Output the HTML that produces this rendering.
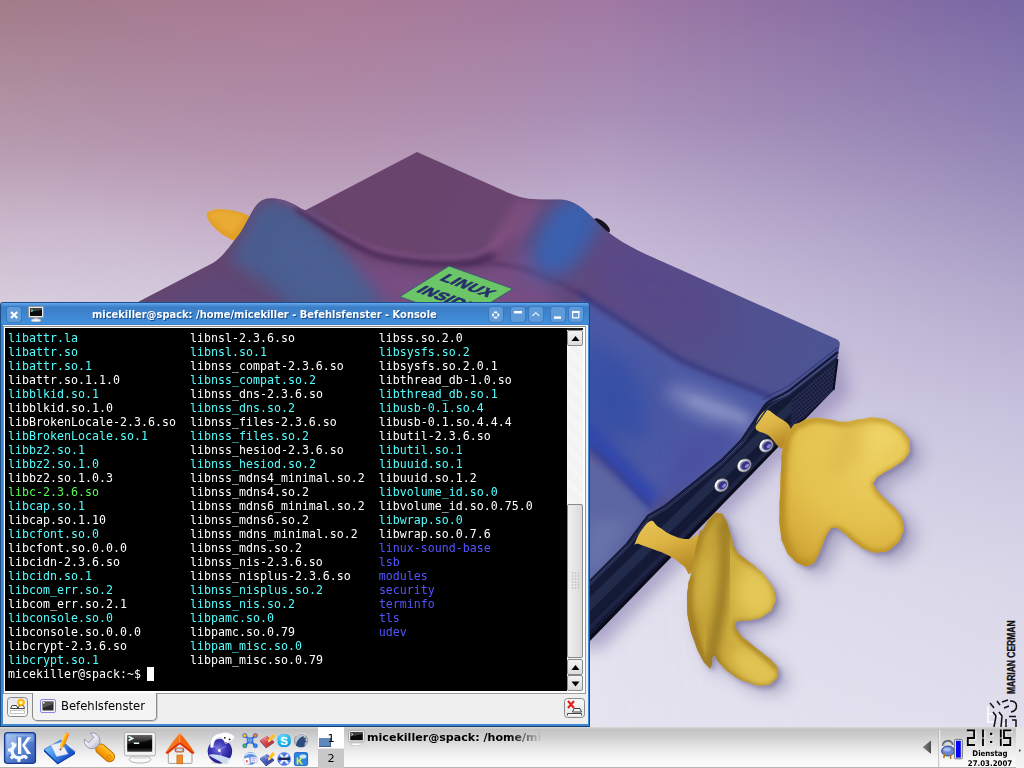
<!DOCTYPE html>
<html lang="de">
<head>
<meta charset="utf-8">
<title>micekiller@spack: /home/micekiller - Befehlsfenster - Konsole</title>
<style>
html,body{margin:0;padding:0;width:1024px;height:768px;overflow:hidden;background:#dedcea;}
body{position:relative;font-family:"DejaVu Sans","Liberation Sans",sans-serif;}
#wall{position:absolute;left:0;top:0;width:1024px;height:768px;display:block;}
/* ---------- window ---------- */
#win{position:absolute;left:0;top:302px;width:589.5px;height:425px;}
#win .frame{position:absolute;left:0;top:0;right:0;bottom:0;box-sizing:border-box;border:1px solid #1c4a82;border-top-color:#1f4f8e;border-bottom:1px solid #173e70;background:linear-gradient(#5fa4e8 0,#5fa4e8 1px,#4c90d8 2px,#3b7ec6 4.5px,#4290dc 21px,#3a80cc 21.5px,#3a80cc 22.5px,#4088d2 23px,#4088d2 100%);border-radius:3px 3px 0 0;}
#title{position:absolute;left:92px;top:4px;width:360px;height:18px;line-height:18px;font-family:"DejaVu Sans Condensed","DejaVu Sans","Liberation Sans",sans-serif;font-weight:bold;font-size:11px;color:#fff;white-space:nowrap;text-shadow:1px 1px 0 #1d4a85;}
.tb{position:absolute;top:5.2px;margin-left:0.6px;width:14.4px;height:14.4px;border-radius:3px;background:#5f9ad9;box-shadow:0 0 0 0.8px #3a76bc;}
.tb svg{display:block;margin:-0.2px 0 0 -0.6px}
#client{position:absolute;left:3px;top:23px;width:584.5px;height:399px;background:#efefef;}
#termborder{position:absolute;left:0;top:1px;width:581px;height:366px;background:#fff;border:1px solid #9c9c9c;border-top-color:#8e8e8e;border-left-color:#8e8e8e;}
#term{position:absolute;left:2px;top:3px;width:562px;height:363px;background:#000;overflow:hidden;}
pre{margin:0;}
#txt{position:absolute;left:2.7px;top:2.5px;font-family:"DejaVu Sans Mono","Liberation Mono",monospace;font-size:11.6px;line-height:14px;letter-spacing:0.017px;color:#fff;white-space:pre;}
.c{color:#54ffff}.g{color:#54ff54}.b{color:#5454ff}
#cursor{position:absolute;left:142px;top:339px;width:7px;height:14px;background:#fff;}
#sb{position:absolute;left:564px;top:3px;width:16px;height:361px;border-top:2px solid #161616;background:#f6f6f6;background-image:repeating-linear-gradient(45deg,#f0f0f0 0,#f0f0f0 1px,#f9f9f9 1px,#f9f9f9 2px);}
.sbtn{position:absolute;left:0;width:15px;height:15px;border:1px solid #8a8a8a;border-radius:2px;background:linear-gradient(#f4f4f4,#dcdcdc);box-sizing:border-box;width:16px;height:16px}
.sbtn svg{display:block;margin:-0.5px}
#thumb{position:absolute;left:0;top:174px;width:16px;height:154px;box-sizing:border-box;border:1px solid #8a8a8a;border-radius:2px;background:linear-gradient(90deg,#f0f0f0,#dadada);}
#thumb svg{display:block;margin:-0.5px}
#tabbar{position:absolute;left:0;top:369px;width:584px;height:30px;background:#efefef;}
#tabline{display:none}
#newtab{position:absolute;left:4px;top:3.4px;width:21px;height:20px;box-sizing:border-box;border:1px solid #8a8a8a;border-radius:3.5px;background:linear-gradient(#e4e4ea,#fafafa);}
#newtab svg,#closetab svg{display:block}
#closetab{position:absolute;left:560.6px;top:3.6px;width:21px;height:20px;box-sizing:border-box;border:1px solid #8a8a8a;border-radius:3.5px;background:linear-gradient(#f8f8f8,#e6e6e6);}
#tab{position:absolute;left:29px;top:-1px;width:125px;height:28px;box-sizing:border-box;border:1px solid #8a8a8a;border-top:none;border-radius:0 0 5px 5px;background:#f3f3f3;box-shadow:1px 1px 0 #cfcfcf;}
#tab span{position:absolute;left:28px;top:6px;font-size:11.6px;line-height:15px;color:#000;white-space:nowrap;}
/* ---------- panel ---------- */
#panel{position:absolute;left:0;top:727px;width:1024px;height:41px;background:linear-gradient(#d8d8d8 0,#c2c2c2 2.5px,#cccccc 8px,#dcdcdc 16px,#ebebeb 24px,#f6f6f6 32px,#fbfbfb 39px,#fbfbfb 39.5px,#b4b4b4 40.5px);}
#pager{position:absolute;left:318px;top:0;width:26px;height:41px;font-size:11.3px;color:#000;}
#d1{position:absolute;left:0;top:0;width:26px;height:21px;background:#fff;}
#d2{position:absolute;left:0;top:22px;width:26px;height:19px;background:#c8c8c8;}
#pager span{position:absolute;left:0;width:26px;text-align:center;line-height:14px;}
#d1 span{top:4.5px}#d2 span{top:3px}
#dwin{position:absolute;left:1px;top:11px;width:12px;height:9px;background:#5f87ba;border-right:1px solid #3d5f8e;border-bottom:1px solid #3d5f8e;box-sizing:border-box;}
#task{position:absolute;left:345px;top:0;width:200px;height:20px;overflow:hidden;}
#tasktxt{position:absolute;left:22.4px;top:3.4px;font-size:11.08px;font-weight:bold;line-height:16px;white-space:nowrap;color:#000;-webkit-mask-image:linear-gradient(90deg,#000 0,#000 142px,rgba(0,0,0,0) 176px);mask-image:linear-gradient(90deg,#000 0,#000 142px,rgba(0,0,0,0) 176px);}
#day,#date{position:absolute;left:960px;width:60px;text-align:center;font-family:"DejaVu Sans Condensed","DejaVu Sans",sans-serif;font-size:7.8px;line-height:9px;color:#000;font-weight:bold;white-space:nowrap;}
#day{top:21.6px}#date{top:32.4px}
#hide{position:absolute;left:1016px;top:0;width:8px;height:41px;background:linear-gradient(#e4e4e4,#f4f4f4);}
#hide svg{display:block}
/* GRAYAA */
#title,#txt,#tab span,#pager span,#tasktxt,#day,#date{will-change:transform;}
</style>
</head>
<body>
<svg id="wall" width="1024" height="768" viewBox="0 0 1024 768">
<defs>
  <linearGradient id="vL" x1="0" y1="0" x2="0" y2="768" gradientUnits="userSpaceOnUse">
    <stop offset="0" stop-color="#a27c88"/>
    <stop offset="0.195" stop-color="#b89cb0"/>
    <stop offset="0.3" stop-color="#ccb9cd"/>
    <stop offset="0.39" stop-color="#d6ccdc"/>
    <stop offset="0.5" stop-color="#e6e0ee"/>
    <stop offset="0.6" stop-color="#efecf5"/>
    <stop offset="0.8" stop-color="#efedf6"/>
    <stop offset="1" stop-color="#ebe9f3"/>
  </linearGradient>
  <linearGradient id="vM" x1="0" y1="0" x2="0" y2="768" gradientUnits="userSpaceOnUse">
    <stop offset="0" stop-color="#9e78a3"/>
    <stop offset="0.15" stop-color="#a990b7"/>
    <stop offset="0.28" stop-color="#c0b0d0"/>
    <stop offset="0.34" stop-color="#c9bcd9"/>
    <stop offset="0.42" stop-color="#d0c8e0"/>
    <stop offset="0.6" stop-color="#dcd8ea"/>
    <stop offset="0.8" stop-color="#e3e1ee"/>
    <stop offset="1" stop-color="#e6e4f0"/>
  </linearGradient>
  <linearGradient id="vR" x1="0" y1="0" x2="0" y2="768" gradientUnits="userSpaceOnUse">
    <stop offset="0" stop-color="#7868a4"/>
    <stop offset="0.195" stop-color="#9486b6"/>
    <stop offset="0.39" stop-color="#b4abcd"/>
    <stop offset="0.55" stop-color="#c8c3de"/>
    <stop offset="0.75" stop-color="#d9d6e8"/>
    <stop offset="1" stop-color="#e2e0ee"/>
  </linearGradient>
  <linearGradient id="hM" x1="0" y1="0" x2="1024" y2="0" gradientUnits="userSpaceOnUse">
    <stop offset="0" stop-color="#000"/>
    <stop offset="0.6" stop-color="#fff"/>
    <stop offset="1" stop-color="#fff"/>
  </linearGradient>
  <linearGradient id="hR" x1="0" y1="0" x2="1024" y2="0" gradientUnits="userSpaceOnUse">
    <stop offset="0" stop-color="#000"/>
    <stop offset="0.6" stop-color="#000"/>
    <stop offset="1" stop-color="#fff"/>
  </linearGradient>
  <mask id="mM" maskUnits="userSpaceOnUse" x="0" y="0" width="1024" height="768"><rect width="1024" height="768" fill="url(#hM)"/></mask>
  <mask id="mR" maskUnits="userSpaceOnUse" x="0" y="0" width="1024" height="768"><rect width="1024" height="768" fill="url(#hR)"/></mask>
  <radialGradient id="gPink" cx="320" cy="-30" r="340" gradientUnits="userSpaceOnUse"><stop offset="0" stop-color="#c07c94" stop-opacity="0.34"/><stop offset="0.6" stop-color="#b87c98" stop-opacity="0.16"/><stop offset="1" stop-color="#b07c9c" stop-opacity="0"/></radialGradient>
</defs>
<rect width="1024" height="768" fill="url(#vL)"/>
<rect width="1024" height="768" fill="url(#vM)" mask="url(#mM)"/>
<rect width="1024" height="768" fill="url(#vR)" mask="url(#mR)"/>
<rect width="1024" height="320" fill="url(#gPink)"/>
<defs>
<filter id="b2" x="-20%" y="-20%" width="140%" height="140%"><feGaussianBlur stdDeviation="2"/></filter>
<filter id="b4" x="-30%" y="-30%" width="160%" height="160%"><feGaussianBlur stdDeviation="4"/></filter>
<filter id="b8" x="-40%" y="-40%" width="180%" height="180%"><feGaussianBlur stdDeviation="8"/></filter>
<filter id="b14" x="-50%" y="-50%" width="200%" height="200%"><feGaussianBlur stdDeviation="14"/></filter>
<filter id="b22" x="-60%" y="-60%" width="220%" height="220%"><feGaussianBlur stdDeviation="22"/></filter>
<clipPath id="cpCover"><path d="M417,152 L505,191.3 C520,198 528,199.5 540,199.5 L560,199.5 C574,200 584,209 595,220 C606,231 616,240 644,253.4 L835,338.6 Q841,341 839.5,346 L838,356 L790,393.5 C778,401 770,400 764.6,407 C760,414 757,418 754,423.8 L741.7,442.5 L720.8,463.3 L700,480 L665,508 L648,518 L627,546 L589,584 L560,612 L100,612 L100,325 L140,301 L213,263 C222,258 230,246 239.6,233.8 C246,224 252,210 257,204.5 C262,199 266,198.6 271,198.3 C280,198 290,202 296,205.5 C300,208 303,210 305.5,210.3 L417,152Z"/></clipPath>
<clipPath id="cpF1"><path d="M790.8,429.1 C796.4,420.4 792.5,426.2 799.9,422.6 C807.3,418.9 803.4,419.3 812.9,418.1 C822.5,417.0 818.1,418.0 828.5,419.2 C839.0,420.4 833.8,421.8 844.2,421.8 C854.6,421.8 848.5,420.4 859.8,419.2 C871.1,418.0 866.7,416.6 878.0,418.1 C889.3,419.7 884.5,418.5 893.6,423.9 C902.8,429.2 900.0,426.9 905.4,434.3 C910.7,441.6 909.4,438.6 909.8,446.0 C910.2,453.4 911.2,449.9 906.7,456.4 C902.2,462.9 904.1,459.9 896.2,465.5 C888.4,471.2 890.2,468.6 883.2,473.3 C876.3,478.1 878.0,475.1 875.4,479.8 C872.8,484.6 871.9,481.1 875.4,487.7 C878.9,494.2 878.9,492.0 885.8,499.4 C892.8,506.8 890.6,502.0 896.2,509.8 C901.9,517.6 901.0,514.1 902.8,522.8 C904.5,531.5 904.5,528.0 901.5,535.8 C898.4,543.6 900.2,540.9 893.6,546.2 C887.1,551.6 890.6,550.7 881.9,552.0 C873.2,553.3 876.7,553.4 867.6,550.2 C858.5,546.9 862.4,548.0 854.6,542.3 C846.8,536.7 850.7,538.0 844.2,533.2 C837.7,528.5 840.3,528.5 835.1,528.0 C829.8,527.6 832.9,525.9 828.5,531.9 C824.2,538.0 825.9,537.6 822.0,546.2 C818.1,554.9 820.7,551.7 816.8,558.0 C812.9,564.2 815.5,562.8 810.3,565.0 C805.1,567.2 807.3,566.8 801.2,564.5 C795.1,562.1 797.7,564.0 792.1,558.0 C786.4,551.9 788.2,555.4 784.3,546.2 C780.4,537.1 781.9,542.8 780.4,530.6 C778.8,518.5 779.6,523.7 779.6,509.8 C779.6,495.9 779.8,502.8 780.4,489.0 C780.9,475.1 780.3,481.6 781.1,468.1 C782.0,454.7 779.8,461.6 783.0,448.6 C786.2,435.6 785.1,437.7 790.8,429.1Z"/></clipPath>
<clipPath id="cpF2"><path d="M698.1,537.8 C702.0,523.4 699.0,535.6 703.3,528.6 C707.7,521.7 705.9,522.1 711.1,516.9 C716.4,511.7 714.2,512.2 719.0,513.0 C723.7,513.9 721.6,512.6 725.5,519.5 C729.4,526.5 727.2,523.9 730.7,533.9 C734.1,543.8 731.1,541.2 735.9,549.5 C740.7,557.7 737.6,552.1 745.0,558.6 C752.4,565.1 750.2,561.6 758.0,569.0 C765.8,576.4 762.8,572.5 768.4,580.7 C774.1,589.0 773.2,585.5 774.9,593.8 C776.7,602.0 776.7,598.5 773.6,605.5 C770.6,612.4 772.8,609.8 765.8,614.6 C758.9,619.4 761.5,617.6 752.8,619.8 C744.1,622.0 745.4,619.4 739.8,621.1 C734.1,622.8 735.9,620.7 735.9,625.0 C735.9,629.3 735.0,628.0 739.8,634.1 C744.6,640.2 742.4,636.7 750.2,643.2 C758.0,649.7 755.4,647.1 763.2,653.6 C771.0,660.2 768.7,656.7 773.6,662.8 C778.6,668.8 778.1,665.8 778.1,671.9 C778.1,678.0 778.6,676.5 773.6,681.0 C768.7,685.5 771.9,685.0 763.2,685.4 C754.5,685.9 758.0,685.9 747.6,682.3 C737.2,678.6 741.1,680.6 732.0,674.5 C722.9,668.4 726.3,670.1 720.3,664.1 C714.2,658.0 716.8,655.4 713.8,656.2 C710.7,657.1 713.3,663.6 711.1,666.7 C709.0,669.7 710.7,668.8 707.2,665.4 C703.8,661.9 705.1,664.5 700.7,656.2 C696.4,648.0 698.1,651.9 694.2,640.6 C690.3,629.3 691.4,634.5 689.0,622.4 C686.7,610.2 687.4,616.3 687.2,604.2 C686.9,592.0 686.8,596.8 688.2,585.9 C689.7,575.1 688.3,587.7 691.6,571.6 C694.9,555.6 694.2,552.1 698.1,537.8Z"/></clipPath>
<linearGradient id="gCover" x1="330" y1="200" x2="800" y2="420" gradientUnits="userSpaceOnUse"><stop offset="0" stop-color="#69446b"/><stop offset="0.42" stop-color="#694672"/><stop offset="0.6" stop-color="#5b4b86"/><stop offset="0.8" stop-color="#52508e"/><stop offset="1" stop-color="#4c5494"/></linearGradient>
<linearGradient id="gFace" x1="600" y1="560" x2="640" y2="600" gradientUnits="userSpaceOnUse"><stop offset="0" stop-color="#1c2448"/><stop offset="0.35" stop-color="#2a3668"/><stop offset="0.5" stop-color="#141a38"/><stop offset="0.8" stop-color="#222c58"/><stop offset="1" stop-color="#10142c"/></linearGradient>
<linearGradient id="gNeck" x1="0" y1="0" x2="0.4" y2="1"><stop offset="0" stop-color="#e8c656"/><stop offset="0.5" stop-color="#dcb444"/><stop offset="1" stop-color="#b88c28"/></linearGradient>
<radialGradient id="gF1" cx="870" cy="450" r="120" gradientUnits="userSpaceOnUse"><stop offset="0" stop-color="#ecd062"/><stop offset="0.6" stop-color="#e4c24e"/><stop offset="1" stop-color="#d4aa3a"/></radialGradient>
<linearGradient id="gF2" x1="688" y1="600" x2="775" y2="600" gradientUnits="userSpaceOnUse"><stop offset="0" stop-color="#b08a28"/><stop offset="0.2" stop-color="#c4a238"/><stop offset="0.5" stop-color="#ceae40"/><stop offset="0.75" stop-color="#dabc4c"/><stop offset="1" stop-color="#e0c252"/></linearGradient>
<pattern id="mesh" width="3" height="3" patternUnits="userSpaceOnUse" patternTransform="rotate(-40)"><rect width="3" height="3" fill="#2a305c"/><circle cx="1.5" cy="1.5" r="1.05" fill="#0c0e20"/></pattern>
</defs>
<g opacity="0.6">
<path d="M790.8,429.1 C796.4,420.4 792.5,426.2 799.9,422.6 C807.3,418.9 803.4,419.3 812.9,418.1 C822.5,417.0 818.1,418.0 828.5,419.2 C839.0,420.4 833.8,421.8 844.2,421.8 C854.6,421.8 848.5,420.4 859.8,419.2 C871.1,418.0 866.7,416.6 878.0,418.1 C889.3,419.7 884.5,418.5 893.6,423.9 C902.8,429.2 900.0,426.9 905.4,434.3 C910.7,441.6 909.4,438.6 909.8,446.0 C910.2,453.4 911.2,449.9 906.7,456.4 C902.2,462.9 904.1,459.9 896.2,465.5 C888.4,471.2 890.2,468.6 883.2,473.3 C876.3,478.1 878.0,475.1 875.4,479.8 C872.8,484.6 871.9,481.1 875.4,487.7 C878.9,494.2 878.9,492.0 885.8,499.4 C892.8,506.8 890.6,502.0 896.2,509.8 C901.9,517.6 901.0,514.1 902.8,522.8 C904.5,531.5 904.5,528.0 901.5,535.8 C898.4,543.6 900.2,540.9 893.6,546.2 C887.1,551.6 890.6,550.7 881.9,552.0 C873.2,553.3 876.7,553.4 867.6,550.2 C858.5,546.9 862.4,548.0 854.6,542.3 C846.8,536.7 850.7,538.0 844.2,533.2 C837.7,528.5 840.3,528.5 835.1,528.0 C829.8,527.6 832.9,525.9 828.5,531.9 C824.2,538.0 825.9,537.6 822.0,546.2 C818.1,554.9 820.7,551.7 816.8,558.0 C812.9,564.2 815.5,562.8 810.3,565.0 C805.1,567.2 807.3,566.8 801.2,564.5 C795.1,562.1 797.7,564.0 792.1,558.0 C786.4,551.9 788.2,555.4 784.3,546.2 C780.4,537.1 781.9,542.8 780.4,530.6 C778.8,518.5 779.6,523.7 779.6,509.8 C779.6,495.9 779.8,502.8 780.4,489.0 C780.9,475.1 780.3,481.6 781.1,468.1 C782.0,454.7 779.8,461.6 783.0,448.6 C786.2,435.6 785.1,437.7 790.8,429.1Z" fill="#8c86ac" filter="url(#b8)" transform="translate(12,9)"/>
<path d="M698.1,537.8 C702.0,523.4 699.0,535.6 703.3,528.6 C707.7,521.7 705.9,522.1 711.1,516.9 C716.4,511.7 714.2,512.2 719.0,513.0 C723.7,513.9 721.6,512.6 725.5,519.5 C729.4,526.5 727.2,523.9 730.7,533.9 C734.1,543.8 731.1,541.2 735.9,549.5 C740.7,557.7 737.6,552.1 745.0,558.6 C752.4,565.1 750.2,561.6 758.0,569.0 C765.8,576.4 762.8,572.5 768.4,580.7 C774.1,589.0 773.2,585.5 774.9,593.8 C776.7,602.0 776.7,598.5 773.6,605.5 C770.6,612.4 772.8,609.8 765.8,614.6 C758.9,619.4 761.5,617.6 752.8,619.8 C744.1,622.0 745.4,619.4 739.8,621.1 C734.1,622.8 735.9,620.7 735.9,625.0 C735.9,629.3 735.0,628.0 739.8,634.1 C744.6,640.2 742.4,636.7 750.2,643.2 C758.0,649.7 755.4,647.1 763.2,653.6 C771.0,660.2 768.7,656.7 773.6,662.8 C778.6,668.8 778.1,665.8 778.1,671.9 C778.1,678.0 778.6,676.5 773.6,681.0 C768.7,685.5 771.9,685.0 763.2,685.4 C754.5,685.9 758.0,685.9 747.6,682.3 C737.2,678.6 741.1,680.6 732.0,674.5 C722.9,668.4 726.3,670.1 720.3,664.1 C714.2,658.0 716.8,655.4 713.8,656.2 C710.7,657.1 713.3,663.6 711.1,666.7 C709.0,669.7 710.7,668.8 707.2,665.4 C703.8,661.9 705.1,664.5 700.7,656.2 C696.4,648.0 698.1,651.9 694.2,640.6 C690.3,629.3 691.4,634.5 689.0,622.4 C686.7,610.2 687.4,616.3 687.2,604.2 C686.9,592.0 686.8,596.8 688.2,585.9 C689.7,575.1 688.3,587.7 691.6,571.6 C694.9,555.6 694.2,552.1 698.1,537.8Z" fill="#8c86ac" filter="url(#b8)" transform="translate(10,8)"/>
<path d="M838,345 L850,395 L800,440 L600,650 L560,640 Z" fill="#8a80b0" filter="url(#b8)"/>
</g>
<path d="M790.8,429.1 C796.4,420.4 792.5,426.2 799.9,422.6 C807.3,418.9 803.4,419.3 812.9,418.1 C822.5,417.0 818.1,418.0 828.5,419.2 C839.0,420.4 833.8,421.8 844.2,421.8 C854.6,421.8 848.5,420.4 859.8,419.2 C871.1,418.0 866.7,416.6 878.0,418.1 C889.3,419.7 884.5,418.5 893.6,423.9 C902.8,429.2 900.0,426.9 905.4,434.3 C910.7,441.6 909.4,438.6 909.8,446.0 C910.2,453.4 911.2,449.9 906.7,456.4 C902.2,462.9 904.1,459.9 896.2,465.5 C888.4,471.2 890.2,468.6 883.2,473.3 C876.3,478.1 878.0,475.1 875.4,479.8 C872.8,484.6 871.9,481.1 875.4,487.7 C878.9,494.2 878.9,492.0 885.8,499.4 C892.8,506.8 890.6,502.0 896.2,509.8 C901.9,517.6 901.0,514.1 902.8,522.8 C904.5,531.5 904.5,528.0 901.5,535.8 C898.4,543.6 900.2,540.9 893.6,546.2 C887.1,551.6 890.6,550.7 881.9,552.0 C873.2,553.3 876.7,553.4 867.6,550.2 C858.5,546.9 862.4,548.0 854.6,542.3 C846.8,536.7 850.7,538.0 844.2,533.2 C837.7,528.5 840.3,528.5 835.1,528.0 C829.8,527.6 832.9,525.9 828.5,531.9 C824.2,538.0 825.9,537.6 822.0,546.2 C818.1,554.9 820.7,551.7 816.8,558.0 C812.9,564.2 815.5,562.8 810.3,565.0 C805.1,567.2 807.3,566.8 801.2,564.5 C795.1,562.1 797.7,564.0 792.1,558.0 C786.4,551.9 788.2,555.4 784.3,546.2 C780.4,537.1 781.9,542.8 780.4,530.6 C778.8,518.5 779.6,523.7 779.6,509.8 C779.6,495.9 779.8,502.8 780.4,489.0 C780.9,475.1 780.3,481.6 781.1,468.1 C782.0,454.7 779.8,461.6 783.0,448.6 C786.2,435.6 785.1,437.7 790.8,429.1Z" fill="#6a6290" opacity="0.5" filter="url(#b2)" transform="translate(3,3)"/>
<path d="M698.1,537.8 C702.0,523.4 699.0,535.6 703.3,528.6 C707.7,521.7 705.9,522.1 711.1,516.9 C716.4,511.7 714.2,512.2 719.0,513.0 C723.7,513.9 721.6,512.6 725.5,519.5 C729.4,526.5 727.2,523.9 730.7,533.9 C734.1,543.8 731.1,541.2 735.9,549.5 C740.7,557.7 737.6,552.1 745.0,558.6 C752.4,565.1 750.2,561.6 758.0,569.0 C765.8,576.4 762.8,572.5 768.4,580.7 C774.1,589.0 773.2,585.5 774.9,593.8 C776.7,602.0 776.7,598.5 773.6,605.5 C770.6,612.4 772.8,609.8 765.8,614.6 C758.9,619.4 761.5,617.6 752.8,619.8 C744.1,622.0 745.4,619.4 739.8,621.1 C734.1,622.8 735.9,620.7 735.9,625.0 C735.9,629.3 735.0,628.0 739.8,634.1 C744.6,640.2 742.4,636.7 750.2,643.2 C758.0,649.7 755.4,647.1 763.2,653.6 C771.0,660.2 768.7,656.7 773.6,662.8 C778.6,668.8 778.1,665.8 778.1,671.9 C778.1,678.0 778.6,676.5 773.6,681.0 C768.7,685.5 771.9,685.0 763.2,685.4 C754.5,685.9 758.0,685.9 747.6,682.3 C737.2,678.6 741.1,680.6 732.0,674.5 C722.9,668.4 726.3,670.1 720.3,664.1 C714.2,658.0 716.8,655.4 713.8,656.2 C710.7,657.1 713.3,663.6 711.1,666.7 C709.0,669.7 710.7,668.8 707.2,665.4 C703.8,661.9 705.1,664.5 700.7,656.2 C696.4,648.0 698.1,651.9 694.2,640.6 C690.3,629.3 691.4,634.5 689.0,622.4 C686.7,610.2 687.4,616.3 687.2,604.2 C686.9,592.0 686.8,596.8 688.2,585.9 C689.7,575.1 688.3,587.7 691.6,571.6 C694.9,555.6 694.2,552.1 698.1,537.8Z" fill="#6a6290" opacity="0.5" filter="url(#b2)" transform="translate(3,3)"/>
<path d="M206.8,213.5 C210,209 222,208.5 230.8,210.3 C238,211.5 244,213.5 248.4,215.6 L250,225 L233.8,241 C226,237 220,233 216.2,229.4 C211,224.5 206,218 206.8,213.5Z" fill="#e2a028"/>
<path d="M209,213 C214,210 226,211 238,214 L244,218 L232,234 C222,228 212,220 209,213Z" fill="#eeb03a" opacity="0.7" filter="url(#b2)"/>
<ellipse cx="602" cy="225.5" rx="10" ry="4" transform="rotate(40 602 225.5)" fill="#16121e"/>
<path d="M838,350 L834.5,388 L589,641 L560,670 L560,580 L780,380Z" fill="#141a36"/>
<path d="M792,400 L589,598 L589,612 L798,406Z" fill="#283252" opacity="0.7"/>
<path d="M812,404 L589,626 L589,631 L818,405Z" fill="#242c4c" opacity="0.6"/>
<path d="M834.5,385 L589,637 L589,642 L834.5,389Z" fill="#0a0c1c"/>
<path d="M837.5,359 L833.5,390 L806,416 L791,428 L791.7,398.75Z" fill="url(#mesh)"/>
<path d="M837.5,359 L833.5,390" stroke="#0c0e20" stroke-width="2"/>
<g transform="translate(766.7,445.6) rotate(-42)"><ellipse rx="7.8" ry="6.6" fill="#3c3c4c"/><ellipse rx="7.3" ry="6.1" cx="-0.4" cy="-0.4" fill="#a4a4b2"/><ellipse rx="6.2" ry="5" cx="-1" cy="-1.1" fill="#dcdce4"/><ellipse rx="5.2" ry="4.2" cx="0" cy="0" fill="#787890"/><ellipse rx="4.4" ry="3.4" cx="0.5" cy="0.6" fill="#34348c"/><ellipse rx="2.6" ry="1.5" cx="1.3" cy="1.9" fill="#9c9ce0" opacity="0.8"/><path d="M-5.6,-2.6 A6.2,5 0 0 1 1.5,-5.6" stroke="#fff" stroke-width="1.3" fill="none"/></g>
<g transform="translate(744.8,465.4) rotate(-42)"><ellipse rx="7.8" ry="6.6" fill="#3c3c4c"/><ellipse rx="7.3" ry="6.1" cx="-0.4" cy="-0.4" fill="#a4a4b2"/><ellipse rx="6.2" ry="5" cx="-1" cy="-1.1" fill="#dcdce4"/><ellipse rx="5.2" ry="4.2" cx="0" cy="0" fill="#787890"/><ellipse rx="4.4" ry="3.4" cx="0.5" cy="0.6" fill="#34348c"/><ellipse rx="2.6" ry="1.5" cx="1.3" cy="1.9" fill="#9c9ce0" opacity="0.8"/><path d="M-5.6,-2.6 A6.2,5 0 0 1 1.5,-5.6" stroke="#fff" stroke-width="1.3" fill="none"/></g>
<g transform="translate(721.9,485.2) rotate(-42)"><ellipse rx="7.8" ry="6.6" fill="#3c3c4c"/><ellipse rx="7.3" ry="6.1" cx="-0.4" cy="-0.4" fill="#a4a4b2"/><ellipse rx="6.2" ry="5" cx="-1" cy="-1.1" fill="#dcdce4"/><ellipse rx="5.2" ry="4.2" cx="0" cy="0" fill="#787890"/><ellipse rx="4.4" ry="3.4" cx="0.5" cy="0.6" fill="#34348c"/><ellipse rx="2.6" ry="1.5" cx="1.3" cy="1.9" fill="#9c9ce0" opacity="0.8"/><path d="M-5.6,-2.6 A6.2,5 0 0 1 1.5,-5.6" stroke="#fff" stroke-width="1.3" fill="none"/></g>
<path d="M764.7,410.8 C768.9,408.5 771.2,412.4 776.5,416.0 C781.7,419.7 789.5,422.6 790.8,429.1 C792.1,435.6 787.4,447.3 783.0,448.6 C778.5,449.9 774.1,439.7 768.6,435.6 C763.2,431.4 756.4,432.7 755.6,427.8 C754.8,422.8 760.6,413.2 764.7,410.8Z" fill="url(#gNeck)"/>
<path d="M648.6,522.1 C654.9,518.3 652.8,523.9 659.1,527.3 C665.3,530.8 664.4,532.0 672.1,535.2 C679.7,538.3 680.8,538.4 687.7,539.1 C694.7,539.8 697.1,529.1 698.1,537.8 C699.2,546.4 695.8,564.3 691.6,571.6 C687.4,578.9 688.4,569.3 682.5,565.1 C676.6,560.9 677.1,560.2 669.5,556.0 C661.8,551.8 661.8,552.6 653.9,549.5 C645.9,546.4 644.4,546.4 639.5,544.3 C634.7,542.2 633.2,547.6 635.6,541.7 C638.1,535.8 642.4,526.0 648.6,522.1Z" fill="url(#gNeck)"/>
<path d="M417,152 L505,191.3 C520,198 528,199.5 540,199.5 L560,199.5 C574,200 584,209 595,220 C606,231 616,240 644,253.4 L835,338.6 Q841,341 839.5,346 L838,356 L790,393.5 C778,401 770,400 764.6,407 C760,414 757,418 754,423.8 L741.7,442.5 L720.8,463.3 L700,480 L665,508 L648,518 L627,546 L589,584 L560,612 L100,612 L100,325 L140,301 L213,263 C222,258 230,246 239.6,233.8 C246,224 252,210 257,204.5 C262,199 266,198.6 271,198.3 C280,198 290,202 296,205.5 C300,208 303,210 305.5,210.3 L417,152Z" fill="url(#gCover)"/>
<g clip-path="url(#cpCover)">
<path d="M213,263 L140,301 L100,330 L330,330 L300,290Z" fill="#5d4a78" filter="url(#b14)" opacity="0.9"/>
<path d="M330,240 C360,262 400,272 453,274 C490,272 510,262 528,240 L560,310 L360,320Z" fill="#7a4f86" filter="url(#b8)" opacity="0.85"/>
<path d="M258,202 L284,199 L318,222 L352,262 L392,312 L296,312 L262,282 L228,260 L246,226Z" fill="#4a5e92" filter="url(#b8)" opacity="0.95"/>
<path d="M280,226 L330,250 L366,300 L310,300 L270,262Z" fill="#4c6094" filter="url(#b8)" opacity="0.8"/>
<path d="M296,208 C318,222 345,243 377,255 C400,262 440,266 470,263 C490,260 503,250 516,234" fill="none" stroke="#4a2c58" stroke-width="6" filter="url(#b2)" opacity="0.85"/>
<path d="M276,199.5 C300,203 330,228 372,247 C400,257 440,259 468,256 C486,252 500,242 512,226" fill="none" stroke="#8a5a90" stroke-width="2.5" filter="url(#b2)" opacity="0.8"/>
<path d="M462,264 C490,262 515,264 540,274 C560,282 575,290 592,302" fill="none" stroke="#482c5a" stroke-width="4" filter="url(#b2)" opacity="0.55"/>
<path d="M516,200 L545,201 L526,238 L500,258 L486,248Z" fill="#80507f" filter="url(#b4)" opacity="0.85"/>
<ellipse cx="565" cy="236" rx="25" ry="50" transform="rotate(34 565 236)" fill="#3c5eaa" filter="url(#b14)"/>
<ellipse cx="567" cy="234" rx="19" ry="40" transform="rotate(34 567 234)" fill="#3a60ae" filter="url(#b8)"/>
<path d="M604,232 L700,276 L720,340 L640,318 L600,280Z" fill="#584a8a" filter="url(#b14)" opacity="0.85"/>
<path d="M580,296 C620,320 640,335 676,359 C700,372 740,384 772,398 L764.6,407 L741.7,442.5 L700,480 L652,502 L580,440Z" fill="#4e5aa4" filter="url(#b4)"/>
<path d="M580,330 L640,372 L652,440 L600,440 L580,420Z" fill="#3650a6" filter="url(#b14)" opacity="0.95"/>
<ellipse cx="712" cy="409" rx="50" ry="13" transform="rotate(24 712 409)" fill="#8088c0" filter="url(#b8)" opacity="0.9"/>
<path d="M692,400 C710,408 728,414 744,418" fill="none" stroke="#9298cc" stroke-width="7" filter="url(#b4)" opacity="0.8" stroke-linecap="round"/>
<path d="M680,440 L740,425 L700,480 L660,500Z" fill="#4c50a0" filter="url(#b8)" opacity="0.8"/>
<path d="M580,294 C620,319 640,333 676,357 C700,371 740,383 774,398" fill="none" stroke="#34357c" stroke-width="5" filter="url(#b2)" opacity="0.8"/>
<path d="M580,448 L652,506 L648,518 L627,546 L589,584 L560,612 L560,440Z" fill="#5c66a2" filter="url(#b4)"/>
<path d="M586,520 L630,520 L600,570 L586,584Z" fill="#6a74ac" filter="url(#b8)" opacity="0.9"/>
<path d="M580,424 C610,450 630,476 654,501" fill="none" stroke="#3046ac" stroke-width="16" filter="url(#b4)" opacity="0.95"/>
<path d="M580,437 C610,462 630,486 652,508" fill="none" stroke="#2c3690" stroke-width="3" filter="url(#b2)" opacity="0.7"/>
<g transform="matrix(0.94,0.335,-0.85,0.53,449,266)">
<rect x="0" y="0" width="68" height="58" fill="#6cc566" stroke="#3c5c74" stroke-width="1.2"/>
<text x="8" y="21" font-family="Liberation Sans, sans-serif" font-weight="bold" font-size="16.5" fill="#26306c" stroke="#26306c" stroke-width="0.7" letter-spacing="0.6">LINUX</text>
<text x="5" y="45" font-family="Liberation Sans, sans-serif" font-weight="bold" font-size="16.5" fill="#26306c" stroke="#26306c" stroke-width="0.7" letter-spacing="0.6">INSIDE</text>
</g>
</g>
<path d="M838.5,347 L790,385 C778,393 770,393 763,400" fill="none" stroke="#343c78" stroke-width="1.2"/>
<path d="M838,352 L790,390 C778,398 772,398 765,405 L741.7,440 L720.8,461 L700,478 L665,506 L648,516 L627,544 L589,582" fill="none" stroke="#141a36" stroke-width="2.4"/>
<path d="M838,356 L790,394 C778,402 773,402 767,409 L743,443 L722,464 L701,481 L666,509 L649,519 L628,547 L589,586" fill="none" stroke="#2a3458" stroke-width="1.4"/>
<path d="M790.8,429.1 C796.4,420.4 792.5,426.2 799.9,422.6 C807.3,418.9 803.4,419.3 812.9,418.1 C822.5,417.0 818.1,418.0 828.5,419.2 C839.0,420.4 833.8,421.8 844.2,421.8 C854.6,421.8 848.5,420.4 859.8,419.2 C871.1,418.0 866.7,416.6 878.0,418.1 C889.3,419.7 884.5,418.5 893.6,423.9 C902.8,429.2 900.0,426.9 905.4,434.3 C910.7,441.6 909.4,438.6 909.8,446.0 C910.2,453.4 911.2,449.9 906.7,456.4 C902.2,462.9 904.1,459.9 896.2,465.5 C888.4,471.2 890.2,468.6 883.2,473.3 C876.3,478.1 878.0,475.1 875.4,479.8 C872.8,484.6 871.9,481.1 875.4,487.7 C878.9,494.2 878.9,492.0 885.8,499.4 C892.8,506.8 890.6,502.0 896.2,509.8 C901.9,517.6 901.0,514.1 902.8,522.8 C904.5,531.5 904.5,528.0 901.5,535.8 C898.4,543.6 900.2,540.9 893.6,546.2 C887.1,551.6 890.6,550.7 881.9,552.0 C873.2,553.3 876.7,553.4 867.6,550.2 C858.5,546.9 862.4,548.0 854.6,542.3 C846.8,536.7 850.7,538.0 844.2,533.2 C837.7,528.5 840.3,528.5 835.1,528.0 C829.8,527.6 832.9,525.9 828.5,531.9 C824.2,538.0 825.9,537.6 822.0,546.2 C818.1,554.9 820.7,551.7 816.8,558.0 C812.9,564.2 815.5,562.8 810.3,565.0 C805.1,567.2 807.3,566.8 801.2,564.5 C795.1,562.1 797.7,564.0 792.1,558.0 C786.4,551.9 788.2,555.4 784.3,546.2 C780.4,537.1 781.9,542.8 780.4,530.6 C778.8,518.5 779.6,523.7 779.6,509.8 C779.6,495.9 779.8,502.8 780.4,489.0 C780.9,475.1 780.3,481.6 781.1,468.1 C782.0,454.7 779.8,461.6 783.0,448.6 C786.2,435.6 785.1,437.7 790.8,429.1Z" fill="url(#gF1)"/>
<g clip-path="url(#cpF1)">
<path d="M790.8,429.1 C796.4,420.4 792.5,426.2 799.9,422.6 C807.3,418.9 803.4,419.3 812.9,418.1 C822.5,417.0 818.1,418.0 828.5,419.2 C839.0,420.4 833.8,421.8 844.2,421.8 C854.6,421.8 848.5,420.4 859.8,419.2 C871.1,418.0 866.7,416.6 878.0,418.1 C889.3,419.7 884.5,418.5 893.6,423.9 C902.8,429.2 900.0,426.9 905.4,434.3 C910.7,441.6 909.4,438.6 909.8,446.0 C910.2,453.4 911.2,449.9 906.7,456.4 C902.2,462.9 904.1,459.9 896.2,465.5 C888.4,471.2 890.2,468.6 883.2,473.3 C876.3,478.1 878.0,475.1 875.4,479.8 C872.8,484.6 871.9,481.1 875.4,487.7 C878.9,494.2 878.9,492.0 885.8,499.4 C892.8,506.8 890.6,502.0 896.2,509.8 C901.9,517.6 901.0,514.1 902.8,522.8 C904.5,531.5 904.5,528.0 901.5,535.8 C898.4,543.6 900.2,540.9 893.6,546.2 C887.1,551.6 890.6,550.7 881.9,552.0 C873.2,553.3 876.7,553.4 867.6,550.2 C858.5,546.9 862.4,548.0 854.6,542.3 C846.8,536.7 850.7,538.0 844.2,533.2 C837.7,528.5 840.3,528.5 835.1,528.0 C829.8,527.6 832.9,525.9 828.5,531.9 C824.2,538.0 825.9,537.6 822.0,546.2 C818.1,554.9 820.7,551.7 816.8,558.0 C812.9,564.2 815.5,562.8 810.3,565.0 C805.1,567.2 807.3,566.8 801.2,564.5 C795.1,562.1 797.7,564.0 792.1,558.0 C786.4,551.9 788.2,555.4 784.3,546.2 C780.4,537.1 781.9,542.8 780.4,530.6 C778.8,518.5 779.6,523.7 779.6,509.8 C779.6,495.9 779.8,502.8 780.4,489.0 C780.9,475.1 780.3,481.6 781.1,468.1 C782.0,454.7 779.8,461.6 783.0,448.6 C786.2,435.6 785.1,437.7 790.8,429.1Z" fill="none" stroke="#b88c24" stroke-width="7" filter="url(#b2)" opacity="0.75" transform="translate(1.5,1.5)"/>
<path d="M783,440 L779,480 L780,530 L792,558 L803,566 L812,562" fill="none" stroke="#b48a24" stroke-width="9" filter="url(#b4)" opacity="0.85"/>
<path d="M836,530 L846,538 L868,552 L884,553 L896,545" fill="none" stroke="#c09a2c" stroke-width="6" filter="url(#b2)" opacity="0.6"/>
<ellipse cx="850" cy="440" rx="14" ry="40" transform="rotate(25 850 440)" fill="#d8b444" filter="url(#b8)" opacity="0.55"/>
<ellipse cx="880" cy="436" rx="22" ry="12" fill="#f2da70" filter="url(#b8)" opacity="0.6"/>
</g>
<path d="M698.1,537.8 C702.0,523.4 699.0,535.6 703.3,528.6 C707.7,521.7 705.9,522.1 711.1,516.9 C716.4,511.7 714.2,512.2 719.0,513.0 C723.7,513.9 721.6,512.6 725.5,519.5 C729.4,526.5 727.2,523.9 730.7,533.9 C734.1,543.8 731.1,541.2 735.9,549.5 C740.7,557.7 737.6,552.1 745.0,558.6 C752.4,565.1 750.2,561.6 758.0,569.0 C765.8,576.4 762.8,572.5 768.4,580.7 C774.1,589.0 773.2,585.5 774.9,593.8 C776.7,602.0 776.7,598.5 773.6,605.5 C770.6,612.4 772.8,609.8 765.8,614.6 C758.9,619.4 761.5,617.6 752.8,619.8 C744.1,622.0 745.4,619.4 739.8,621.1 C734.1,622.8 735.9,620.7 735.9,625.0 C735.9,629.3 735.0,628.0 739.8,634.1 C744.6,640.2 742.4,636.7 750.2,643.2 C758.0,649.7 755.4,647.1 763.2,653.6 C771.0,660.2 768.7,656.7 773.6,662.8 C778.6,668.8 778.1,665.8 778.1,671.9 C778.1,678.0 778.6,676.5 773.6,681.0 C768.7,685.5 771.9,685.0 763.2,685.4 C754.5,685.9 758.0,685.9 747.6,682.3 C737.2,678.6 741.1,680.6 732.0,674.5 C722.9,668.4 726.3,670.1 720.3,664.1 C714.2,658.0 716.8,655.4 713.8,656.2 C710.7,657.1 713.3,663.6 711.1,666.7 C709.0,669.7 710.7,668.8 707.2,665.4 C703.8,661.9 705.1,664.5 700.7,656.2 C696.4,648.0 698.1,651.9 694.2,640.6 C690.3,629.3 691.4,634.5 689.0,622.4 C686.7,610.2 687.4,616.3 687.2,604.2 C686.9,592.0 686.8,596.8 688.2,585.9 C689.7,575.1 688.3,587.7 691.6,571.6 C694.9,555.6 694.2,552.1 698.1,537.8Z" fill="url(#gF2)"/>
<g clip-path="url(#cpF2)">
<path d="M698.1,537.8 C702.0,523.4 699.0,535.6 703.3,528.6 C707.7,521.7 705.9,522.1 711.1,516.9 C716.4,511.7 714.2,512.2 719.0,513.0 C723.7,513.9 721.6,512.6 725.5,519.5 C729.4,526.5 727.2,523.9 730.7,533.9 C734.1,543.8 731.1,541.2 735.9,549.5 C740.7,557.7 737.6,552.1 745.0,558.6 C752.4,565.1 750.2,561.6 758.0,569.0 C765.8,576.4 762.8,572.5 768.4,580.7 C774.1,589.0 773.2,585.5 774.9,593.8 C776.7,602.0 776.7,598.5 773.6,605.5 C770.6,612.4 772.8,609.8 765.8,614.6 C758.9,619.4 761.5,617.6 752.8,619.8 C744.1,622.0 745.4,619.4 739.8,621.1 C734.1,622.8 735.9,620.7 735.9,625.0 C735.9,629.3 735.0,628.0 739.8,634.1 C744.6,640.2 742.4,636.7 750.2,643.2 C758.0,649.7 755.4,647.1 763.2,653.6 C771.0,660.2 768.7,656.7 773.6,662.8 C778.6,668.8 778.1,665.8 778.1,671.9 C778.1,678.0 778.6,676.5 773.6,681.0 C768.7,685.5 771.9,685.0 763.2,685.4 C754.5,685.9 758.0,685.9 747.6,682.3 C737.2,678.6 741.1,680.6 732.0,674.5 C722.9,668.4 726.3,670.1 720.3,664.1 C714.2,658.0 716.8,655.4 713.8,656.2 C710.7,657.1 713.3,663.6 711.1,666.7 C709.0,669.7 710.7,668.8 707.2,665.4 C703.8,661.9 705.1,664.5 700.7,656.2 C696.4,648.0 698.1,651.9 694.2,640.6 C690.3,629.3 691.4,634.5 689.0,622.4 C686.7,610.2 687.4,616.3 687.2,604.2 C686.9,592.0 686.8,596.8 688.2,585.9 C689.7,575.1 688.3,587.7 691.6,571.6 C694.9,555.6 694.2,552.1 698.1,537.8Z" fill="none" stroke="#a07a20" stroke-width="6" filter="url(#b2)" opacity="0.7" transform="translate(1,1.5)"/>
<ellipse cx="700" cy="585" rx="9" ry="34" transform="rotate(8 700 585)" fill="#d8bc4c" filter="url(#b8)" opacity="0.8"/>
<path d="M722,520 C727,545 726,580 720,612 C716,634 712,650 711,664" fill="none" stroke="#8a6c1c" stroke-width="10" filter="url(#b4)" opacity="0.8"/>
<path d="M690,575 C686,610 694,645 708,668" fill="none" stroke="#a07c22" stroke-width="7" filter="url(#b2)" opacity="0.75"/>
<ellipse cx="754" cy="592" rx="17" ry="22" fill="#e6ca5a" filter="url(#b8)" opacity="0.9"/>
<ellipse cx="752" cy="666" rx="22" ry="10" transform="rotate(35 752 666)" fill="#e2c454" filter="url(#b4)" opacity="0.85"/>
<path d="M736,626 C742,640 760,652 776,668" fill="none" stroke="#b08c28" stroke-width="5" filter="url(#b2)" opacity="0.6"/>
</g>
<text transform="translate(1014.6,694) rotate(-90)" font-family="Liberation Sans, DejaVu Sans, sans-serif" font-weight="bold" font-size="10.2" textLength="73.6" lengthAdjust="spacingAndGlyphs" fill="#111" stroke="#111" stroke-width="0.3">MARIAN CERMAN</text>
<g fill="none" stroke-linejoin="round" stroke-linecap="butt">
<path d="M988,706 L988,722 L994,722 M988,714 L993,714 M996,716 L1002,716 M1003,724 L1008,724" stroke="#f8f8fc" stroke-width="2.2" opacity="0.9"/>
<path d="M990,703 L994,708 M997,701 L1000,705 M1002,702 L1008,700 M1004,708 L1009,706 M1010,701 Q1016.5,701 1016.5,706 Q1016.5,711 1011,712 M1009,716.5 L1016,716.5 M993,712 L996,716 L994,727 M999,712 L1002,716 L1001,727 M1006,719 L1006,727 M1012,720 L1016,720 L1016,727" stroke="#111" stroke-width="1.5"/>
</g>
</svg>
<div id="win">
<div class="frame"></div>
<div id="title">micekiller@spack: /home/micekiller - Befehlsfenster - Konsole</div>
<div class="tb" style="left:6.3px"><svg width="16" height="16" viewBox="0 0 16 16"><path d="M5,4.9 L11.2,11.1 M11.2,4.9 L5,11.1" stroke="#fff" stroke-width="2.1" fill="none"/></svg></div>
<svg id="ticon" style="position:absolute;left:28px;top:4px" width="16" height="16" viewBox="0 0 16 16"><rect x="0.5" y="0.5" width="15" height="11" rx="1.2" fill="#e8e8e8" stroke="#9a9a9a"/><rect x="2" y="2" width="12" height="8" fill="#0c0c0c"/><path d="M2,2 L14,2 L14,4 L2,6Z" fill="#555" opacity="0.7"/><path d="M3,3.5 L5,4.5 L3,5.5" stroke="#7fd" stroke-width="0.8" fill="none"/><rect x="6" y="11.5" width="4" height="2" fill="#bbb"/><ellipse cx="8" cy="14.3" rx="5" ry="1.6" fill="#f4f4f4" stroke="#aaa" stroke-width="0.6"/></svg>
<div class="tb" style="left:488px"><svg width="16" height="16" viewBox="0 0 16 16"><g fill="#fff"><rect x="6.2" y="4.5" width="2.9" height="1.7"/><rect x="6.2" y="9.8" width="2.9" height="1.7"/><rect x="4.1" y="6.6" width="1.7" height="2.8"/><rect x="9.5" y="6.6" width="1.8" height="2.8"/><rect x="5.5" y="5.6" width="1" height="1.2" opacity="0.6"/><rect x="8.9" y="5.6" width="1" height="1.2" opacity="0.6"/><rect x="5.5" y="9.3" width="1" height="1.2" opacity="0.6"/><rect x="8.9" y="9.3" width="1" height="1.2" opacity="0.6"/></g></svg></div>
<div class="tb" style="left:510px"><svg width="16" height="16" viewBox="0 0 16 16"><rect x="4" y="4" width="8" height="2.4" fill="#fff"/></svg></div>
<div class="tb" style="left:528px"><svg width="16" height="16" viewBox="0 0 16 16"><path d="M4.4,8.8 L7.8,5.6 L11.2,8.8" stroke="#fff" stroke-width="1.05" fill="none"/></svg></div>
<div class="tb" style="left:550px"><svg width="16" height="16" viewBox="0 0 16 16"><rect x="4" y="9.4" width="7" height="2.4" fill="#fff"/></svg></div>
<div class="tb" style="left:568px"><svg width="16" height="16" viewBox="0 0 16 16"><rect x="4.6" y="4.6" width="6.2" height="6.2" fill="none" stroke="#fff" stroke-width="1.2"/><rect x="4" y="4" width="7.4" height="2" fill="#fff"/></svg></div>
<div id="client">
 <div id="termborder"></div>
 <div id="term"><pre id="txt"><span class="c">libattr.la</span>                libnsl-2.3.6.so            libss.so.2.0
<span class="c">libattr.so</span>                <span class="c">libnsl.so.1</span>                <span class="c">libsysfs.so.2</span>
<span class="c">libattr.so.1</span>              libnss_compat-2.3.6.so     libsysfs.so.2.0.1
libattr.so.1.1.0          <span class="c">libnss_compat.so.2</span>         libthread_db-1.0.so
<span class="c">libblkid.so.1</span>             libnss_dns-2.3.6.so        <span class="c">libthread_db.so.1</span>
libblkid.so.1.0           <span class="c">libnss_dns.so.2</span>            <span class="c">libusb-0.1.so.4</span>
libBrokenLocale-2.3.6.so  libnss_files-2.3.6.so      libusb-0.1.so.4.4.4
<span class="c">libBrokenLocale.so.1</span>      <span class="c">libnss_files.so.2</span>          libutil-2.3.6.so
<span class="c">libbz2.so.1</span>               libnss_hesiod-2.3.6.so     <span class="c">libutil.so.1</span>
<span class="c">libbz2.so.1.0</span>             <span class="c">libnss_hesiod.so.2</span>         <span class="c">libuuid.so.1</span>
libbz2.so.1.0.3           libnss_mdns4_minimal.so.2  libuuid.so.1.2
<span class="g">libc-2.3.6.so</span>             libnss_mdns4.so.2          <span class="c">libvolume_id.so.0</span>
<span class="c">libcap.so.1</span>               libnss_mdns6_minimal.so.2  libvolume_id.so.0.75.0
libcap.so.1.10            libnss_mdns6.so.2          <span class="c">libwrap.so.0</span>
<span class="c">libcfont.so.0</span>             libnss_mdns_minimal.so.2   libwrap.so.0.7.6
libcfont.so.0.0.0         libnss_mdns.so.2           <span class="b">linux-sound-base</span>
libcidn-2.3.6.so          libnss_nis-2.3.6.so        <span class="b">lsb</span>
<span class="c">libcidn.so.1</span>              libnss_nisplus-2.3.6.so    <span class="b">modules</span>
<span class="c">libcom_err.so.2</span>           <span class="c">libnss_nisplus.so.2</span>        <span class="b">security</span>
libcom_err.so.2.1         <span class="c">libnss_nis.so.2</span>            <span class="b">terminfo</span>
<span class="c">libconsole.so.0</span>           <span class="c">libpamc.so.0</span>               <span class="b">tls</span>
libconsole.so.0.0.0       libpamc.so.0.79            <span class="b">udev</span>
libcrypt-2.3.6.so         <span class="c">libpam_misc.so.0</span>
<span class="c">libcrypt.so.1</span>             libpam_misc.so.0.79
micekiller@spack:~$ </pre><div id="cursor"></div></div>
 <div id="sb">
  <div class="sbtn" style="top:0px"><svg width="15" height="15" viewBox="0 0 15 15"><path d="M3.5,10 L7.5,5 L11.5,10Z" fill="#000"/></svg></div>
  <div id="thumb"><svg width="15" height="153" viewBox="0 0 15 153"><g fill="#b8b8b8"><circle cx="4.5" cy="68" r="0.8"/><circle cx="7.5" cy="68" r="0.8"/><circle cx="10.5" cy="68" r="0.8"/><circle cx="4.5" cy="71" r="0.8"/><circle cx="7.5" cy="71" r="0.8"/><circle cx="10.5" cy="71" r="0.8"/><circle cx="4.5" cy="74" r="0.8"/><circle cx="7.5" cy="74" r="0.8"/><circle cx="10.5" cy="74" r="0.8"/><circle cx="4.5" cy="77" r="0.8"/><circle cx="7.5" cy="77" r="0.8"/><circle cx="10.5" cy="77" r="0.8"/><circle cx="4.5" cy="80" r="0.8"/><circle cx="7.5" cy="80" r="0.8"/><circle cx="10.5" cy="80" r="0.8"/><circle cx="4.5" cy="83" r="0.8"/><circle cx="7.5" cy="83" r="0.8"/><circle cx="10.5" cy="83" r="0.8"/></g></svg></div>
  <div class="sbtn" style="top:329px"><svg width="15" height="15" viewBox="0 0 15 15"><path d="M3.5,10 L7.5,5 L11.5,10Z" fill="#000"/></svg></div>
  <div class="sbtn" style="top:345px"><svg width="15" height="15" viewBox="0 0 15 15"><path d="M3.5,5.5 L7.5,10.5 L11.5,5.5Z" fill="#000"/></svg></div>
 </div>
 <div id="tabbar">
  <div id="tabline"></div>
  <div id="newtab"><svg width="19" height="18" viewBox="0 0 19 18"><path d="M2.5,10.5 L4,7.5 L8.5,7.5 L10,10.5Z" fill="#f4f4f4" stroke="#444" stroke-width="1"/><path d="M10,10.5 L11.5,7.5 L15.5,7.5 L16.5,10.5Z" fill="#fff" stroke="#444" stroke-width="1"/><rect x="2.5" y="12.5" width="14" height="3" fill="#fff" stroke="#bbb" stroke-width="0.8"/><g stroke="#ffb000" stroke-width="2"><path d="M13,0.5 L13,8.5 M9,4.5 L17,4.5 M10.2,1.7 L15.8,7.3 M15.8,1.7 L10.2,7.3"/></g><circle cx="13" cy="4.5" r="1.8" fill="#fff6a0"/></svg></div>
  <div id="tab"><svg style="position:absolute;left:7px;top:6px" width="16" height="14" viewBox="0 0 16 14"><rect x="0.5" y="0.5" width="15" height="13" rx="1.5" fill="#f4f4ff" stroke="#8888e4"/><rect x="2.5" y="2.5" width="11" height="9" fill="#2a2a2a"/><path d="M2.5,2.5 L13.5,2.5 L13.5,5 L2.5,9Z" fill="#777" opacity="0.55"/><rect x="3" y="3" width="1.6" height="1.6" fill="#eee"/></svg><span>Befehlsfenster</span></div>
  <div id="closetab"><svg width="19" height="18" viewBox="0 0 19 18"><path d="M7.5,13 L9,9.5 L15,9.5 L16.5,13Z" fill="#f4f4f4" stroke="#444" stroke-width="1"/><path d="M2.5,16.5 L2.5,14.5 L16.5,14.5 L16.5,16.5" fill="#fff" stroke="#444" stroke-width="1"/><path d="M3,2 L9,9 M9,2 L3,9" stroke="#e02020" stroke-width="2"/></svg></div>
 </div>
</div>

</div>
<div id="panel">
<svg id="picons" width="320" height="41" viewBox="0 0 320 41" style="position:absolute;left:0;top:0">
<defs>
 <linearGradient id="kbg" x1="0" y1="0" x2="1" y2="1"><stop offset="0" stop-color="#8fb8ee"/><stop offset="0.45" stop-color="#5c88d6"/><stop offset="1" stop-color="#2f55b0"/></linearGradient>
 <linearGradient id="padB" x1="0" y1="0" x2="1" y2="0.6"><stop offset="0" stop-color="#a6dcff"/><stop offset="0.45" stop-color="#4a9af0"/><stop offset="1" stop-color="#0a44c0"/></linearGradient>
 <linearGradient id="padR" x1="0" y1="0" x2="1" y2="0.6"><stop offset="0" stop-color="#f08a8a"/><stop offset="0.5" stop-color="#d84c54"/><stop offset="1" stop-color="#b02838"/></linearGradient>
 <linearGradient id="padV" x1="0" y1="0" x2="1" y2="0.6"><stop offset="0" stop-color="#8ca4e8"/><stop offset="0.5" stop-color="#4a64c8"/><stop offset="1" stop-color="#2a3c9c"/></linearGradient>
 <linearGradient id="pen" x1="0" y1="0" x2="1" y2="0"><stop offset="0" stop-color="#ffd84a"/><stop offset="0.5" stop-color="#ffae10"/><stop offset="1" stop-color="#e87800"/></linearGradient>
 <linearGradient id="hand" x1="0" y1="0" x2="0" y2="1"><stop offset="0" stop-color="#ffc830"/><stop offset="0.5" stop-color="#ffa40c"/><stop offset="1" stop-color="#e88800"/></linearGradient>
 <linearGradient id="silver" x1="0" y1="0" x2="1" y2="1"><stop offset="0" stop-color="#ffffff"/><stop offset="0.6" stop-color="#e0e0ec"/><stop offset="1" stop-color="#a8a8c0"/></linearGradient>
 <linearGradient id="scr" x1="0" y1="0" x2="0" y2="1"><stop offset="0" stop-color="#4a4a4a"/><stop offset="0.35" stop-color="#0a0a0a"/><stop offset="0.75" stop-color="#000"/><stop offset="1" stop-color="#3a3a3a"/></linearGradient>
 <linearGradient id="roofL" x1="0" y1="0" x2="1" y2="1"><stop offset="0" stop-color="#ff9a3c"/><stop offset="1" stop-color="#f05a08"/></linearGradient>
 <linearGradient id="wall" x1="0" y1="0" x2="1" y2="0"><stop offset="0" stop-color="#e4e4e4"/><stop offset="0.5" stop-color="#ffffff"/><stop offset="1" stop-color="#d0d0d0"/></linearGradient>
 <radialGradient id="globe" cx="0.45" cy="0.4" r="0.65"><stop offset="0" stop-color="#7a78e0"/><stop offset="0.5" stop-color="#3a34b4"/><stop offset="1" stop-color="#1c1880"/></radialGradient>
 <radialGradient id="skype" cx="0.4" cy="0.3" r="0.8"><stop offset="0" stop-color="#7ee0ff"/><stop offset="0.6" stop-color="#18b4f0"/><stop offset="1" stop-color="#0a8cd0"/></radialGradient>
</defs>
<!-- K menu -->
<g>
 <rect x="4.6" y="5.6" width="30.8" height="30.8" rx="3" fill="url(#kbg)" stroke="#173a94" stroke-width="1.4"/>
 <path d="M6.5,7.5 L33.5,7.5 L33.5,14 C24,15 14,22 6.5,30Z" fill="#fff" opacity="0.22"/>
 <g fill="#f6f9ff">
  <path d="M18.9,24 m-8.6,0 a8.6,8.6 0 1 0 17.2,0 a8.6,8.6 0 1 0 -17.2,0 M18.9,24 m-5.2,0 a5.2,5.2 0 1 1 10.4,0 a5.2,5.2 0 1 1 -10.4,0" fill-rule="evenodd"/>
  <rect x="17.3" y="31" width="3.2" height="4" rx="0.8"/>
  <rect x="17.3" y="31" width="3.2" height="4" rx="0.8" transform="rotate(48 18.9 24)"/>
  <rect x="17.3" y="31" width="3.2" height="4" rx="0.8" transform="rotate(96 18.9 24)"/>
  <rect x="17.3" y="31" width="3.2" height="4" rx="0.8" transform="rotate(140 18.9 24)"/>
  <rect x="17.3" y="31" width="3.2" height="4" rx="0.8" transform="rotate(-48 18.9 24)"/>
 </g>
 <path d="M16.5,9.5 L28,9.5 L28,28 L16.5,28Z" fill="#5582d2"/>
 <path d="M18,10.3 L21.3,10.3 L21.3,27 L18,27Z M22,18.2 L27.3,10.3 L31,10.3 L25,18.6 L31.3,27 L27.2,27Z" fill="#fff"/>
</g>
<!-- pad + pencil (kword-like) -->
<g>
 <ellipse cx="70" cy="24" rx="6" ry="2.2" fill="#000" opacity="0.12"/>
 <path d="M44,22.6 L60.8,13 L75,25.2 L57.6,35.6Z" fill="url(#padB)" stroke="#0c50c8" stroke-width="0.6"/>
 <path d="M44,22.6 L57.6,35.6 L75,25.2 L75,27 L57.6,37.4 L44,24.4Z" fill="#0a3cb0"/>
 <path d="M51,18 L61.5,15.5 L68,27 L56.6,29.6Z" fill="#eceef8" stroke="#c4c8dc" stroke-width="0.5"/>
 <g transform="translate(59.9,23.8) rotate(23)"><path d="M0,0 L-2.1,-5 L-2.1,-19 L2.1,-19 L2.1,-5Z" fill="url(#pen)"/><path d="M0,0 L-2.1,-5 L2.1,-5Z" fill="#e8c48c"/><path d="M0,0 L-0.9,-2 L0.9,-2Z" fill="#3a2a1a"/><rect x="-2.1" y="-19.6" width="4.2" height="1.6" fill="#ff9a60"/></g>
</g>
<!-- wrench -->
<g>
 <g transform="translate(105.2,25.9) rotate(41)"><rect x="-18" y="-2.3" width="9" height="4.6" fill="#dcdcea" stroke="#9a9ab4" stroke-width="0.6"/><rect x="-10.8" y="-5" width="21.6" height="10" rx="4.8" fill="url(#hand)" stroke="#b87400" stroke-width="1"/><circle cx="5.6" cy="0.4" r="2" fill="none" stroke="#d88400" stroke-width="0.9"/></g>
 <g transform="translate(91.9,14)"><path d="M-1.5,-7.9 A7.9,7.9 0 1 1 -7.5,-1.8 L-3,1.7 L1.8,-3.6Z" fill="url(#silver)" stroke="#8888a8" stroke-width="0.8" stroke-linejoin="round"/></g>
</g>
<!-- konsole monitor -->
<g transform="translate(0,-1.1)">
 <ellipse cx="140" cy="33.6" rx="10.8" ry="3.6" fill="#fafafa" stroke="#a8a8a8" stroke-width="0.8"/>
 <path d="M135,29 L145,29 L146.5,33 L133.5,33Z" fill="#e2e2e2"/>
 <rect x="124.4" y="6.4" width="31" height="23.6" rx="2.2" fill="#f2f2f2" stroke="#a6a6a6" stroke-width="0.9"/>
 <rect x="127.2" y="9" width="25" height="16.8" rx="0.8" fill="url(#scr)"/>
 <path d="M127.2,9 L152.2,9 L152.2,13 C144,17 134,16 127.2,18Z" fill="#fff" opacity="0.16"/>
 <path d="M128.6,10.6 L132.6,12.6 L128.6,14.6" fill="none" stroke="#e8ffff" stroke-width="1.5"/>
 <rect x="133.8" y="16.6" width="5.4" height="1.5" fill="#e8ffff"/>
</g>
<!-- home -->
<g>
 <path d="M168.3,24 L180,15.6 L192,24 L192,35.4 Q192,36.4 191,36.4 L169.3,36.4 Q168.3,36.4 168.3,35.4Z" fill="url(#wall)" stroke="#8a8a8a" stroke-width="0.8"/>
 <rect x="176.9" y="28" width="5.8" height="8.8" fill="#f08a28" stroke="#c06010" stroke-width="0.6"/>
 <rect x="174.6" y="20.6" width="9.6" height="4.8" rx="2" fill="#b86a3a"/><rect x="176.4" y="21.6" width="6" height="2.6" fill="#cfd8ec"/>
 <path d="M179.8,6 Q171,16 165.4,25.8 L168.2,26.8 L179.8,16.4Z" fill="url(#roofL)"/>
 <path d="M179.8,6 Q189,16 194.5,25.8 L191.6,26.8 L179.8,16.4Z" fill="#f4640c"/>
 <path d="M165.6,25.8 L179.8,15 L194.3,25.8 L193,27 L179.8,17.2 L167,27Z" fill="#d8300c"/>
 <path d="M179.8,6.2 L179.8,16" stroke="#ffb070" stroke-width="0.8"/>
</g>
<!-- globe with weasel -->
<g>
 <ellipse cx="220" cy="35.6" rx="9" ry="1.6" fill="#000" opacity="0.15"/>
 <circle cx="219.9" cy="24.2" r="12.2" fill="url(#globe)"/>
 <path d="M208.6,28 C214,25.5 226,30 231,32 C229,34.5 226,36 223,36.4 C218,33 212,31 208.6,28Z" fill="#d8ecf8" opacity="0.92"/>
 <path d="M212,17 L219,23 L226,19 M219,23 L222,30" stroke="#c8c8ff" stroke-width="0.6" fill="none" opacity="0.8"/>
 <circle cx="219.4" cy="23.4" r="1.5" fill="#fff" opacity="0.9"/>
 <path d="M210.6,20.6 C209.4,12 214,6.6 221,6.2 C225,4.6 231,5.6 234.6,9.6 C234.4,12.6 231,14.6 228.6,15.4 L225.6,17 C224.4,14 222.8,11.4 220.4,10.4 C216,10.6 213.6,14 213.2,20.4Z" fill="#fff" stroke="#c0c8f0" stroke-width="0.5"/>
 <circle cx="224.8" cy="10.8" r="0.9" fill="#111"/><circle cx="229.6" cy="12.4" r="0.9" fill="#111"/><circle cx="226" cy="15.8" r="0.9" fill="#666"/>
</g>
<!-- small icons row 1 -->
<g>
 <path d="M245,8.4 L255.2,18.6 M255.2,8.4 L245,18.6" stroke="#2c5ed0" stroke-width="1.8"/>
 <rect x="246.8" y="10.2" width="6.6" height="6.4" rx="1" fill="#3a7ae0"/><path d="M248.4,11.6 L249.4,14.6 M250.4,11.4 L251.4,12.4 L250.4,14.8" stroke="#cfe4ff" stroke-width="0.7" fill="none"/>
 <circle cx="244.8" cy="8.6" r="2" fill="#f6c814" stroke="#2c5ed0" stroke-width="0.8"/><circle cx="255.4" cy="8.6" r="2" fill="#f08020" stroke="#2c5ed0" stroke-width="0.8"/>
 <circle cx="244.8" cy="18.8" r="2" fill="#38c838" stroke="#2c5ed0" stroke-width="0.8"/><circle cx="255.4" cy="18.8" r="2" fill="#2a8cf0" stroke="#2c5ed0" stroke-width="0.8"/>
</g>
<g>
 <path d="M260,13 L267,9 L274,14.6 L266,20Z" fill="url(#padR)"/><path d="M260,13 L266,20 L274,14.6 L274,15.8 L266,21.2 L260,14.2Z" fill="#8c1c2c"/>
 <path d="M263.6,12 L267,10.6 M265,13.6 L268.4,12.2" stroke="#f4b0b0" stroke-width="0.7"/>
 <g transform="translate(268,15.4) rotate(38)"><path d="M0,0 L-1.5,-3 L-1.5,-9.4 L1.5,-9.4 L1.5,-3Z" fill="#ffc018"/><path d="M0,0 L-1.5,-3 L1.5,-3Z" fill="#f4d8a8"/></g>
</g>
<g>
 <path d="M284,7 C288.6,6.4 291.6,10 290.6,13.6 C291.8,17 288.6,20.6 284.4,20 C280.4,20.8 276.8,17.6 277.6,13.4 C276.6,9.6 280,6.4 284,7Z" fill="url(#skype)"/>
 <text x="284.1" y="17.6" text-anchor="middle" font-family="Liberation Sans, sans-serif" font-weight="bold" font-size="11.5" fill="#fff">S</text>
</g>
<g>
 <circle cx="301" cy="13.6" r="6.6" fill="#c0c4cc" stroke="#8890a0" stroke-width="0.9"/>
 <path d="M296,18.4 C296.6,14 299,10.6 303.6,9 L303.8,11 L306.4,10.6 L305,13 L306.8,14.6 C304.6,15 304.4,17.4 304.8,19.2 C302,20.6 298.4,20.4 296,18.4Z" fill="#2c4c7e"/>
 <path d="M296,9 A6.6,6.6 0 0 1 306,8.6" stroke="#fff" stroke-width="0.8" fill="none" opacity="0.7"/>
</g>
<!-- small icons row 2 -->
<g>
 <circle cx="250.4" cy="31.4" r="6.4" fill="#5a8ee0"/><path d="M245,28.4 C248,25.6 253,25.4 256,28.6" stroke="#d6e6ff" stroke-width="1.3" fill="none"/>
 <rect x="244" y="31" width="5.6" height="6.4" fill="#fff" stroke="#c8c8d8" stroke-width="0.5" transform="rotate(-10 246.8 34.2)"/><rect x="246" y="33" width="1.6" height="2.4" fill="#e04848" transform="rotate(-10 246.8 34.2)"/>
 <rect x="250.6" y="30" width="6.6" height="5.6" rx="0.8" fill="#e8e8fc" stroke="#a8a8d8" stroke-width="0.5"/><path d="M252,31.6 L256,31.6 M252,33.2 L255,33.2" stroke="#9a9ae0" stroke-width="0.6"/>
</g>
<g>
 <path d="M260,31 L267,27 L274,32.6 L266,38Z" fill="url(#padV)"/><path d="M260,31 L266,38 L274,32.6 L274,33.8 L266,39.2 L260,32.2Z" fill="#1c2a7c"/>
 <path d="M263.6,30 L267,28.6 M265,31.6 L268.4,30.2" stroke="#b8c4f4" stroke-width="0.7"/>
 <g transform="translate(268,33.4) rotate(38)"><path d="M0,0 L-1.5,-3 L-1.5,-9.4 L1.5,-9.4 L1.5,-3Z" fill="#ffc018"/><path d="M0,0 L-1.5,-3 L1.5,-3Z" fill="#f4d8a8"/></g>
</g>
<g>
 <circle cx="284.2" cy="32" r="6.6" fill="#4a74e0"/><circle cx="284.2" cy="32" r="6.6" fill="none" stroke="#7a9cf0" stroke-width="0.8"/>
 <path d="M280.4,27.6 L288,36.6 M288,27.6 L280.4,36.6" stroke="#eaf0ff" stroke-width="2.4"/>
 <rect x="278.4" y="30.6" width="11.6" height="2.4" fill="#1c2450"/>
</g>
<g>
 <rect x="294.4" y="25.6" width="13.2" height="13" rx="1.8" fill="#2a86e0" stroke="#1a5cc0" stroke-width="0.9"/>
 <ellipse cx="303" cy="29.4" rx="3.4" ry="2" fill="#e4f2ff" opacity="0.9"/>
 <path d="M296.6,30.6 L298.4,30.6 L298.4,33.6 L300.8,30.6 L303,30.6 L300.4,33.8 L303.2,37.6 L301,37.6 L298.4,34.2 L298.4,37.6 L296.6,37.6Z" fill="#d8e85a"/>
</g>
</svg>
<div id="pager"><div id="d1"><div id="dwin"></div><span>1</span></div><div id="d2"><span>2</span></div></div>
<div id="task">
 <svg style="position:absolute;left:3px;top:3px" width="17" height="16" viewBox="0 0 17 16"><ellipse cx="8.5" cy="14.2" rx="5.4" ry="1.7" fill="#fafafa" stroke="#a8a8a8" stroke-width="0.6"/><rect x="6.2" y="11.6" width="4.6" height="2" fill="#dcdcdc"/><rect x="0.6" y="0.6" width="15.8" height="11.4" rx="1.4" fill="#f0f0f0" stroke="#a0a0a0" stroke-width="0.8"/><rect x="2.2" y="2" width="12.6" height="8.2" fill="#0a0a0a"/><path d="M2.2,2 L14.8,2 L14.8,4 L2.2,6.4Z" fill="#fff" opacity="0.22"/><path d="M3.2,3.4 L5,4.4 L3.2,5.4" stroke="#dff" stroke-width="0.7" fill="none"/></svg>
 <span id="tasktxt">micekiller@spack: /home/micekiller - Befehlsfenster - Konsole</span>
</div>
<svg id="tray" width="110" height="41" viewBox="0 0 110 41" style="position:absolute;left:914px;top:0">
 <defs><linearGradient id="arr" x1="0" y1="0" x2="1" y2="0"><stop offset="0" stop-color="#8a8a8a"/><stop offset="1" stop-color="#4a4a4a"/></linearGradient></defs>
 <path d="M8.6,20.2 L17,13.6 L17,26.8Z" fill="url(#arr)"/>
 <rect x="24.2" y="3" width="1" height="37" fill="#bcbcbc"/><rect x="25.2" y="3" width="1" height="37" fill="#f4f4f4"/>
 <!-- network icon -->
 <path d="M29,19 C29,13 38,12 38.6,18" fill="none" stroke="#5a6470" stroke-width="2.2"/><path d="M29,19 C29.6,14.6 37,13.6 38,18" fill="none" stroke="#c8d4e0" stroke-width="0.8"/>
 <ellipse cx="34" cy="24" rx="6.4" ry="5" fill="#6a86d8" stroke="#2c3c84" stroke-width="0.9"/><ellipse cx="33" cy="22.4" rx="3.6" ry="2" fill="#b8c8f4" opacity="0.8"/>
 <path d="M30.6,26.6 L29.8,31 M36.6,27.6 L36.6,32" stroke="#d89a20" stroke-width="1.7"/><path d="M30.6,26.6 L29.8,31 M36.6,27.6 L36.6,32" stroke="#5a4410" stroke-width="0.5"/>
 <!-- blue bar -->
 <rect x="40.4" y="12.4" width="8" height="19.4" rx="1.2" fill="#e4e4e4" stroke="#6a6a6a" stroke-width="0.9"/><rect x="42" y="13.8" width="4.8" height="16.8" fill="#0404f8"/>
</svg>
<svg id="lcd" width="52" height="24" viewBox="0 0 52 24" style="position:absolute;left:964px;top:0px">
 <defs><g id="lcdseg" fill="none" stroke-width="1.8" stroke-linecap="butt" stroke-linejoin="miter">
  <path d="M2.9,3.3 L10.1,3.3 L10.1,11 L3.8,11 L3.8,18 L11,18"/>
  <path d="M19,2.4 L19,10.4 M19,11.4 L19,18.9"/>
  <path d="M36.8,2.4 L36.8,10.4 M36.8,11.4 L36.8,18.9"/>
  <path d="M47.2,3.3 L40,3.3 L40,11 L46.3,11 L46.3,18 L39,18"/>
  <path d="M26,6.9 L28.2,6.9 M26,15 L28.2,15" stroke-width="2.2"/>
 </g></defs>
 <use href="#lcdseg" stroke="#f4f4f4" opacity="0.55" transform="translate(1.7,1.7)"/>
 <use href="#lcdseg" stroke="#000"/>
</svg>
<div id="day">Dienstag</div>
<div id="date">27.03.2007</div>
<div id="hide"><svg width="8" height="41" viewBox="0 0 8 41"><path d="M3,22 L5.2,23.6 L3,25.2Z" fill="#555"/></svg></div>

</div>
</body>
</html>
